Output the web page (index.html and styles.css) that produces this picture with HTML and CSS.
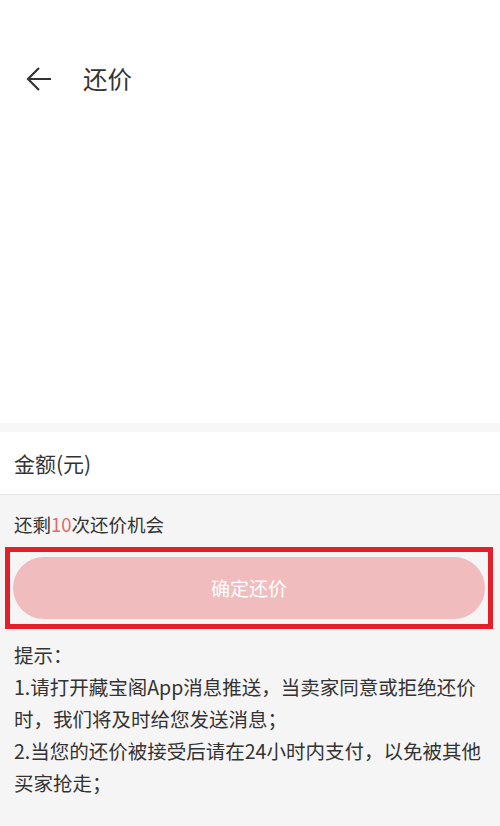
FILE: index.html
```html
<!DOCTYPE html>
<html lang="zh-CN">

<head>
    <meta charset="UTF-8">
    <meta name="viewport" content="width=device-width, initial-scale=1.0">
    <title>还价</title>
    <link rel="stylesheet" href="styles.css">
</head>

<body>
    <div class="top">
        <div class="header">
            <a class="back" href="javascript:;">
                <svg width="26" height="26" viewBox="0 0 26 26">
                    <path d="M13 2 L2 13 L13 24 M2 13 H25" fill="none" stroke="#333" stroke-width="2.2" />
                </svg>
            </a>
            <span class="title">还价</span>
        </div>
    </div>
    <div class="strip"></div>
    <div class="field">金额(元)</div>
    <div class="main">
        <p class="chance">还剩<em>10</em>次还价机会</p>
        <div class="mark">
            <a class="btn" href="javascript:;">确定还价</a>
        </div>
        <div class="tips">
            <p>提示：</p>
            <p>1.请打开藏宝阁App消息推送，当卖家同意或拒绝还价时，我们将及时给您发送消息；</p>
            <p>2.当您的还价被接受后请在24小时内支付，以免被其他买家抢走；</p>
        </div>
    </div>
</body>

</html>
```

FILE: styles.css
```css
html,
body {
    margin: 0;
    padding: 0;
    height: 100%;
}

body {
    font-family: "Noto Sans CJK SC", "Noto Sans", sans-serif;
    color: #333;
    background: #f6f5f5;
}

p {
    margin: 0;
}

.top {
    height: 423px;
    background: #fff;
}

.header {
    display: flex;
    align-items: center;
    height: 40px;
    padding: 59px 0 0 26px;
}

.back {
    display: flex;
    width: 26px;
    height: 26px;
}

.title {
    margin-left: 31px;
    font-size: 24.5px;
    line-height: 40px;
    color: #333;
}

.strip {
    height: 9px;
    background: #f7f7f7;
}

.field {
    height: 62px;
    line-height: 62px;
    padding-left: 14px;
    font-size: 21px;
    color: #333;
    background: #fff;
    border-bottom: 1px solid #e6e6e6;
}

.main {
    padding-bottom: 40px;
}

.chance {
    padding: 14px 0 0 14px;
    height: 38px;
    line-height: 30px;
    font-size: 18.5px;
    color: #333;
}

.chance em {
    font-style: normal;
    color: #e06a6a;
}

.mark {
    margin: 0 7px 0 5px;
    padding: 5px 3px;
    border: 5px solid #e3202a;
}

.btn {
    display: block;
    height: 62px;
    line-height: 62px;
    border-radius: 31px;
    background: #f1bcbe;
    color: #fff;
    font-size: 19px;
    text-align: center;
    text-decoration: none;
}

.tips {
    padding: 10px 14px 0 14px;
    font-size: 19.5px;
    line-height: 32px;
    color: #333;
}
```
